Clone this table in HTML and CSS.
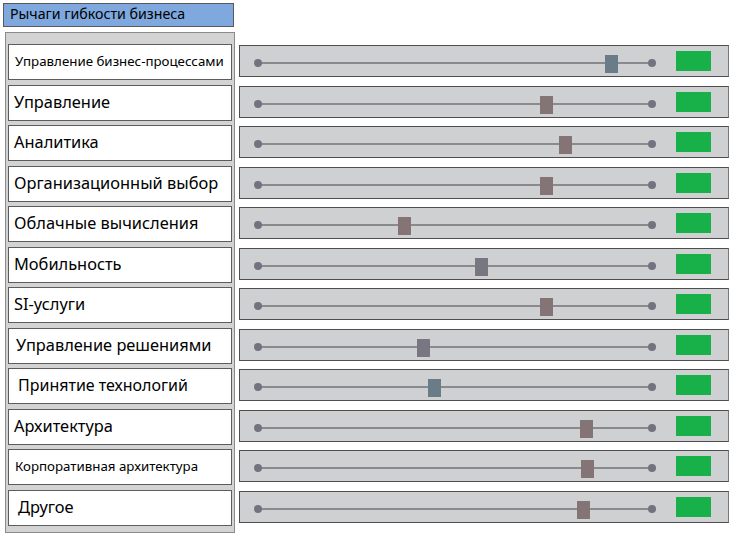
FILE: index.html
```html
<!DOCTYPE html>
<html lang="ru">
<head>
<meta charset="utf-8">
<title>Рычаги гибкости бизнеса</title>
<link rel="stylesheet" href="styles.css">
</head>
<body>
<div class="page">
  <div class="title">Рычаги гибкости бизнеса</div>
  <div class="main">
    <div class="labels">
      <div class="label small">Управление бизнес-процессами</div>
      <div class="label">Управление</div>
      <div class="label">Аналитика</div>
      <div class="label">Организационный выбор</div>
      <div class="label">Облачные вычисления</div>
      <div class="label">Мобильность</div>
      <div class="label">SI-услуги</div>
      <div class="label indent1">Управление решениями</div>
      <div class="label indent2 mid">Принятие технологий</div>
      <div class="label">Архитектура</div>
      <div class="label small">Корпоративная архитектура</div>
      <div class="label indent2">Другое</div>
    </div>
    <div class="sliders">
      <div class="row"><div class="track"><span class="thumb blue" style="left:347px"></span></div><div class="ok"></div></div>
      <div class="row"><div class="track"><span class="thumb brown" style="left:282px"></span></div><div class="ok"></div></div>
      <div class="row"><div class="track"><span class="thumb brown" style="left:301px"></span></div><div class="ok"></div></div>
      <div class="row"><div class="track"><span class="thumb brown" style="left:282px"></span></div><div class="ok"></div></div>
      <div class="row"><div class="track"><span class="thumb brown" style="left:140px"></span></div><div class="ok"></div></div>
      <div class="row"><div class="track"><span class="thumb neutral" style="left:217px"></span></div><div class="ok"></div></div>
      <div class="row"><div class="track"><span class="thumb brown" style="left:282px"></span></div><div class="ok"></div></div>
      <div class="row"><div class="track"><span class="thumb neutral" style="left:159px"></span></div><div class="ok"></div></div>
      <div class="row"><div class="track"><span class="thumb blue" style="left:170px"></span></div><div class="ok"></div></div>
      <div class="row"><div class="track"><span class="thumb brown" style="left:322px"></span></div><div class="ok"></div></div>
      <div class="row"><div class="track"><span class="thumb brown" style="left:323px"></span></div><div class="ok"></div></div>
      <div class="row"><div class="track"><span class="thumb brown" style="left:319px"></span></div><div class="ok"></div></div>
    </div>
  </div>
</div>
</body>
</html>
```
FILE: styles.css
```css
html, body {
  margin: 0;
  padding: 0;
  background: #ffffff;
}
body {
  font-family: "Noto Sans", "Open Sans", sans-serif;
  color: #000;
}
.page {
  padding: 3px 0 0 3px;
  width: 726px;
}
.title {
  box-sizing: border-box;
  width: 231px;
  height: 24px;
  background: #7fa8de;
  border: 1px solid #5a5a5a;
  font-size: 14.2px;
  line-height: 20px;
  padding-left: 6px;
  white-space: nowrap;
}
.main {
  display: flex;
  align-items: flex-start;
  margin-top: 5px;
  gap: 4px;
}
.labels {
  box-sizing: border-box;
  margin-left: 2px;
  width: 230px;
  height: 501px;
  background: #d3d3d3;
  border: 1px solid #8a8a8a;
  padding: 11px 2px 0 2px;
  display: flex;
  flex-direction: column;
  gap: 4.55px;
}
.label {
  box-sizing: border-box;
  height: 36px;
  background: #fff;
  border: 1px solid #5c5c5c;
  display: flex;
  align-items: center;
  padding-left: 5px;
  padding-bottom: 3px;
  font-size: 16.4px;
  white-space: nowrap;
}
.label.small { font-size: 13.3px; padding-left: 6px; padding-bottom: 2px; }
.label.mid { font-size: 16px; }
.label.indent1 { padding-left: 7px; }
.label.indent2 { padding-left: 9px; }
.sliders {
  margin-top: 13px;
  width: 490px;
  display: flex;
  flex-direction: column;
  gap: 8.55px;
}
.row {
  box-sizing: border-box;
  height: 32px;
  background: #cfd0d1;
  border: 1px solid #4e4e4e;
  border-right-color: #777;
  display: flex;
  align-items: flex-start;
}
.track {
  position: relative;
  margin-left: 18px;
  margin-top: 16px;
  width: 394px;
  height: 2px;
  background: #8a8a8e;
}
.track::before,
.track::after {
  content: "";
  position: absolute;
  top: -3px;
  width: 8px;
  height: 8px;
  border-radius: 50%;
  background: #727380;
}
.track::before { left: -4px; }
.track::after { right: -4px; }
.thumb {
  position: absolute;
  top: -7px;
  width: 13px;
  height: 18px;
  background: #807878;
}
.thumb.blue { background: #6b7c89; }
.thumb.brown { background: #857475; }
.thumb.neutral { background: #787680; }
.ok {
  margin-left: 24px;
  margin-top: 5px;
  width: 35px;
  height: 20px;
  background: #17b049;
}
```
